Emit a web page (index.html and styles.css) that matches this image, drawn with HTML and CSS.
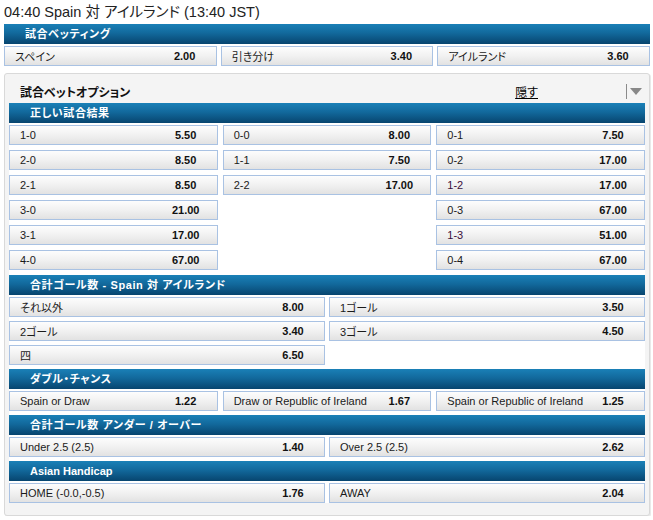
FILE: index.html
```html
<!DOCTYPE html>
<html lang="ja">
<head>
<meta charset="utf-8">
<title>Spain 対 アイルランド</title>
<link rel="stylesheet" href="styles.css">
</head>
<body>
<div class="page">
  <h1 class="title">04:40 Spain 対 アイルランド (13:40 JST)</h1>

  <section class="market">
    <div class="mhead jp">試合ベッティング</div>
    <div class="grid cols3 top-grid">
      <div class="bet"><span class="lbl">スペイン</span><span class="odds">2.00</span></div>
      <div class="bet"><span class="lbl">引き分け</span><span class="odds">3.40</span></div>
      <div class="bet"><span class="lbl">アイルランド</span><span class="odds">3.60</span></div>
    </div>
  </section>

  <div class="panel">
    <div class="panel-head">
      <span class="panel-title">試合ベットオプション</span>
      <a class="hide" href="#">隠す</a>
      <span class="dd"><span class="tri"></span></span>
    </div>

    <div class="panel-body">
      <section class="market wide-gap">
        <div class="mhead jp">正しい試合結果</div>
        <div class="grid cols3 rows5">
          <div class="bet"><span class="lbl">1-0</span><span class="odds">5.50</span></div>
          <div class="bet"><span class="lbl">0-0</span><span class="odds">8.00</span></div>
          <div class="bet"><span class="lbl">0-1</span><span class="odds">7.50</span></div>

          <div class="bet"><span class="lbl">2-0</span><span class="odds">8.50</span></div>
          <div class="bet"><span class="lbl">1-1</span><span class="odds">7.50</span></div>
          <div class="bet"><span class="lbl">0-2</span><span class="odds">17.00</span></div>

          <div class="bet"><span class="lbl">2-1</span><span class="odds">8.50</span></div>
          <div class="bet"><span class="lbl">2-2</span><span class="odds">17.00</span></div>
          <div class="bet"><span class="lbl visited">1-2</span><span class="odds">17.00</span></div>

          <div class="bet"><span class="lbl">3-0</span><span class="odds">21.00</span></div>
          <div class="empty"></div>
          <div class="bet"><span class="lbl">0-3</span><span class="odds">67.00</span></div>

          <div class="bet"><span class="lbl">3-1</span><span class="odds">17.00</span></div>
          <div class="empty"></div>
          <div class="bet"><span class="lbl visited">1-3</span><span class="odds">51.00</span></div>

          <div class="bet"><span class="lbl">4-0</span><span class="odds">67.00</span></div>
          <div class="empty"></div>
          <div class="bet"><span class="lbl">0-4</span><span class="odds">67.00</span></div>
        </div>
      </section>

      <section class="market">
        <div class="mhead jp">合計ゴール数 - Spain 対 アイルランド</div>
        <div class="grid cols2">
          <div class="bet"><span class="lbl">それ以外</span><span class="odds">8.00</span></div>
          <div class="bet"><span class="lbl">1ゴール</span><span class="odds">3.50</span></div>
          <div class="bet"><span class="lbl">2ゴール</span><span class="odds">3.40</span></div>
          <div class="bet"><span class="lbl">3ゴール</span><span class="odds">4.50</span></div>
          <div class="bet"><span class="lbl">四</span><span class="odds">6.50</span></div>
          <div class="empty"></div>
        </div>
      </section>

      <section class="market">
        <div class="mhead jp">ダブル・チャンス</div>
        <div class="grid cols3">
          <div class="bet"><span class="lbl">Spain or Draw</span><span class="odds">1.22</span></div>
          <div class="bet"><span class="lbl">Draw or Republic of Ireland</span><span class="odds">1.67</span></div>
          <div class="bet"><span class="lbl">Spain or Republic of Ireland</span><span class="odds">1.25</span></div>
        </div>
      </section>

      <section class="market">
        <div class="mhead jp">合計ゴール数 アンダー / オーバー</div>
        <div class="grid cols2">
          <div class="bet"><span class="lbl">Under 2.5 (2.5)</span><span class="odds">1.40</span></div>
          <div class="bet"><span class="lbl">Over 2.5 (2.5)</span><span class="odds">2.62</span></div>
        </div>
      </section>

      <section class="market">
        <div class="mhead">Asian Handicap</div>
        <div class="grid cols2">
          <div class="bet"><span class="lbl">HOME (-0.0,-0.5)</span><span class="odds">1.76</span></div>
          <div class="bet"><span class="lbl">AWAY</span><span class="odds">2.04</span></div>
        </div>
      </section>
    </div>
  </div>
</div>
</body>
</html>
```

FILE: styles.css
```css
* { box-sizing: border-box; }

html, body {
  margin: 0;
  padding: 0;
  background: #ffffff;
}

body {
  font-family: "Liberation Sans", "Noto Sans CJK JP", sans-serif;
  color: #1a1a1a;
  font-feature-settings: "palt";
}

.page {
  width: 646px;
  margin-left: 4px;
}

.title {
  margin: 0;
  height: 24px;
  font-size: 14.5px;
  line-height: 24px;
  font-weight: normal;
  color: #222222;
  white-space: nowrap;
}

.market {
  display: flex;
  flex-direction: column;
}

.mhead {
  height: 20px;
  line-height: 20px;
  padding-left: 21px;
  margin-bottom: 2px;
  font-size: 11px;
  font-weight: bold;
  color: #ffffff;
  background: linear-gradient(to bottom, #1a80b7 0%, #12699c 45%, #07456f 100%);
  white-space: nowrap;
}

.mhead.jp {
  letter-spacing: 0.6px;
}

.grid {
  display: grid;
  row-gap: 4px;
}

.cols3 {
  grid-template-columns: repeat(3, 1fr);
  column-gap: 5px;
}

.top-grid {
  column-gap: 4px;
}

.cols2 {
  grid-template-columns: repeat(2, 1fr);
  column-gap: 4px;
}

.rows5 {
  row-gap: 5px;
}

.bet {
  height: 20px;
  display: flex;
  align-items: center;
  padding-left: 10px;
  padding-right: 11px;
  border: 1px solid #a9c2e3;
  background: linear-gradient(to bottom, #fdfdfd 0%, #f1f1f1 50%, #e2e2e2 100%);
  font-size: 11px;
  white-space: nowrap;
}

.lbl {
  flex: 1;
  min-width: 0;
  color: #1a1a1a;
}

.lbl.visited {
  color: #3a0f3c;
}

.odds {
  width: 40px;
  text-align: center;
  font-weight: bold;
  color: #111111;
}

.empty {
  height: 20px;
}

.panel {
  margin-top: 7px;
  border: 1px solid #d9d9d9;
  border-radius: 3px;
  background: #f4f4f4;
  padding: 8px 4px 12px 4px;
  box-shadow: 1px 1px 0 #e9e9e9;
}

.panel-head {
  display: flex;
  align-items: center;
  height: 18px;
  margin-bottom: 3px;
  padding-left: 11px;
  padding-right: 3px;
}

.panel-title {
  flex: 1;
  font-size: 12px;
  font-weight: bold;
  color: #111111;
}

.hide {
  font-size: 12px;
  color: #000000;
  text-decoration: underline;
}

.dd {
  margin-left: 88px;
  height: 15px;
  display: flex;
  align-items: center;
  border-left: 1px solid #8a8a8a;
  padding-left: 3px;
}

.tri {
  width: 0;
  height: 0;
  border-left: 6.5px solid transparent;
  border-right: 6.5px solid transparent;
  border-top: 7px solid #888888;
}

.panel-body {
  display: flex;
  flex-direction: column;
  gap: 4px;
  background: #ffffff;
}

.wide-gap {
  margin-bottom: 1px;
}
```
